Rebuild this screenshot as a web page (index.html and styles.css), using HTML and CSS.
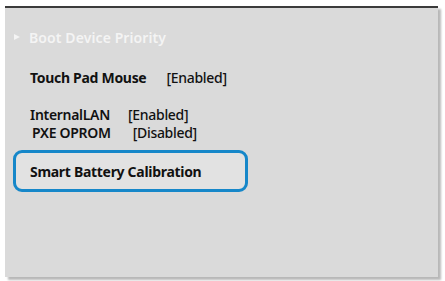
FILE: index.html
```html
<!DOCTYPE html>
<html>
<head>
<meta charset="utf-8">
<link rel="stylesheet" href="styles.css">
</head>
<body>
<div class="panel">
  <div class="boot"><span class="tri"></span><span>Boot Device Priority</span></div>
  <div class="row first"><span class="label">Touch Pad Mouse</span><span class="value gap1">[Enabled]</span></div>
  <div class="group">
    <div class="row"><span class="label m">InternalLAN</span><span class="value gap2">[Enabled]</span></div>
    <div class="row indent"><span class="label m">PXE OPROM</span><span class="value gap3">[Disabled]</span></div>
  </div>
  <div class="selected"><span class="label">Smart Battery Calibration</span></div>
</div>
</body>
</html>
```
FILE: styles.css
```css
html, body {
  margin: 0;
  background: #ffffff;
}
body {
  width: 445px;
  height: 281px;
  overflow: hidden;
  font-family: "Noto Sans", "Open Sans", sans-serif;
}
.panel {
  margin: 6px 0 0 5px;
  width: 433px;
  height: 271px;
  box-sizing: border-box;
  border-top: 2px solid #3b3b3b;
  background: #dadada;
  box-shadow: 3px 3px 2px rgba(0, 0, 0, 0.28);
  display: flex;
  flex-direction: column;
}
.boot {
  display: flex;
  align-items: center;
  margin-top: 20px;
  padding-left: 9px;
  color: #f4f4f4;
  font-size: 14px;
  letter-spacing: 0.1px;
  font-weight: 600;
  height: 18px;
}
.tri {
  width: 0;
  height: 0;
  border-top: 3.5px solid transparent;
  border-bottom: 3.5px solid transparent;
  border-left: 6px solid #f4f4f4;
  margin-right: 9px;
}
.row {
  display: flex;
  align-items: baseline;
  padding-left: 25px;
  color: #111111;
  font-size: 14px;
  letter-spacing: -0.3px;
  height: 17.5px;
  line-height: 17.5px;
}
.row.indent {
  padding-left: 27px;
}
.row.first {
  margin-top: 23px;
}
.group {
  margin-top: 19.5px;
}
.label {
  font-weight: 700;
}
.label.m {
  font-weight: 600;
}
.value {
  font-weight: 500;
}
.gap1 { margin-left: 20px; }
.gap2 { margin-left: 18px; }
.gap3 { margin-left: 22px; }
.selected {
  margin: 9px 0 0 8px;
  width: 235px;
  height: 42px;
  box-sizing: border-box;
  border: 3.5px solid #1687c9;
  border-radius: 9px;
  background: #e2e2e2;
  display: flex;
  align-items: center;
  padding-left: 14px;
  color: #111111;
  font-size: 14px;
  letter-spacing: -0.3px;
}
```
